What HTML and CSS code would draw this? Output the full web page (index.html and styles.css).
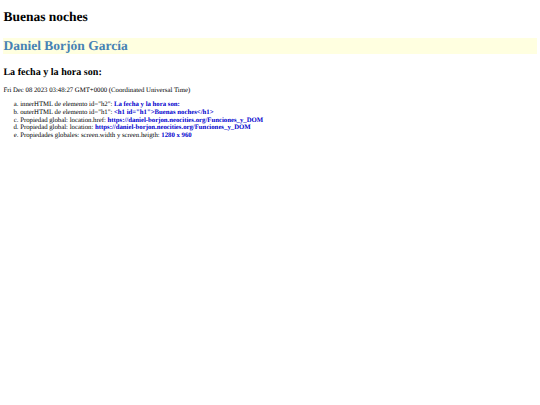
FILE: index.html
```html
<!DOCTYPE html>
<html lang="es">
<head>
  <meta charset="UTF-8">
  <title>Funciones y DOM</title>
  <link rel="stylesheet" href="styles.css">
</head>
<body>

<h1 id="h1">Buenas noches</h1>
<h1 class="author">Daniel Borjón García</h1>
<h2 id="h2">La fecha y la hora son:</h2>
<p class="date">Fri Dec 08 2023 03:48:27 GMT+0000 (Coordinated Universal Time)</p>

<ol class="props">
  <li>innerHTML de elemento id="h2": <b>La fecha y la hora son:</b></li>
  <li>outerHTML de elemento id="h1": <b>&lt;h1 id="h1"&gt;Buenas noches&lt;/h1&gt;</b></li>
  <li>Propiedad global: location.href: <b>https://daniel-borjon.neocities.org/Funciones_y_DOM</b></li>
  <li>Propiedad global: location: <b>https://daniel-borjon.neocities.org/Funciones_y_DOM</b></li>
  <li>Propiedades globales: screen.width y screen.heigth: <b>1280 x 960</b></li>
</ol>

</body>
</html>
```

FILE: styles.css
```css
body {
  margin: 3.4px;
  font-family: "Liberation Serif", serif;
  font-size: 6.75px;
  color: #000;
  background-color: #fff;
  text-rendering: geometricPrecision;
}

h1 {
  font-size: 13.5px;
  margin: 6px 0 9px;
}

.author {
  color: #4682b4;
  background-color: #ffffe0;
  margin: 13px 0;
}

h2 {
  font-size: 10.1px;
  margin: 8.4px 0;
}

.date {
  margin: 6.75px 0;
}

.props {
  list-style-type: lower-alpha;
  margin: 7.6px 0 6.75px;
  padding-left: 16.8px;
  line-height: 7.56px;
}

.props b {
  color: #0000cd;
}
```
